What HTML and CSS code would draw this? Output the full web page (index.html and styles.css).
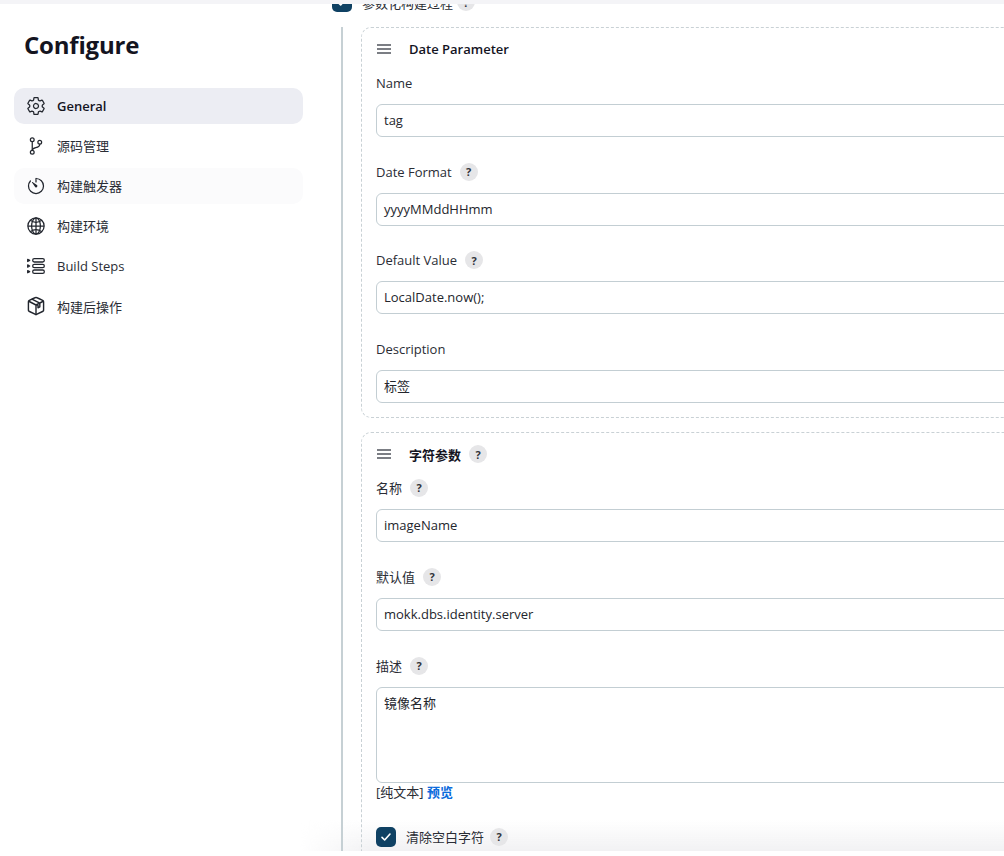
FILE: index.html
```html
<!DOCTYPE html>
<html lang="zh">
<head>
<meta charset="utf-8">
<title>Configure</title>
<link rel="stylesheet" href="styles.css">
</head>
<body>
<div class="topstrip"></div>
<div class="page">
  <aside class="side">
    <h1 class="title">Configure</h1>
    <nav class="nav">
      <a class="item active">
        <svg class="ico" viewBox="0 0 512 512"><path fill="none" stroke="currentColor" stroke-width="32" stroke-linecap="round" stroke-linejoin="round" d="M262.29 192.31a64 64 0 1057.4 57.4 64.13 64.13 0 00-57.4-57.4zM416.39 256a154.34 154.34 0 01-1.53 20.79l45.21 35.46a10.81 10.81 0 012.45 13.75l-42.77 74a10.81 10.81 0 01-13.14 4.59l-44.9-18.08a16.11 16.11 0 00-15.17 1.75A164.48 164.48 0 01325 400.8a15.94 15.94 0 00-8.82 12.14l-6.73 47.89a11.08 11.08 0 01-10.68 9.17h-85.54a11.11 11.11 0 01-10.69-8.87l-6.72-47.82a16.07 16.07 0 00-9-12.22 155.3 155.3 0 01-21.46-12.57 16 16 0 00-15.11-1.71l-44.89 18.07a10.81 10.81 0 01-13.14-4.58l-42.77-74a10.8 10.8 0 012.45-13.75l38.21-30a16.05 16.05 0 006-14.08c-.36-4.17-.58-8.33-.58-12.5s.21-8.27.58-12.35a16 16 0 00-6.07-13.94l-38.19-30A10.81 10.81 0 0149.48 186l42.77-74a10.81 10.81 0 0113.14-4.59l44.9 18.08a16.11 16.11 0 0015.17-1.75A164.48 164.48 0 01187 111.2a15.94 15.94 0 008.82-12.14l6.73-47.89A11.08 11.08 0 01213.23 42h85.54a11.11 11.11 0 0110.69 8.87l6.72 47.82a16.07 16.07 0 009 12.22 155.3 155.3 0 0121.46 12.57 16 16 0 0015.11 1.71l44.89-18.07a10.81 10.81 0 0113.14 4.58l42.77 74a10.8 10.8 0 01-2.45 13.75l-38.21 30a16.05 16.05 0 00-6.05 14.08c.33 4.14.55 8.3.55 12.47z"/></svg>
        <span class="label strong">General</span>
      </a>
      <a class="item">
        <svg class="ico" viewBox="0 0 512 512"><g fill="none" stroke="currentColor" stroke-width="32" stroke-linecap="round" stroke-linejoin="round"><circle cx="160" cy="96" r="48"/><circle cx="160" cy="416" r="48"/><path d="M160 368V144"/><circle cx="352" cy="160" r="48"/><path d="M352 208c0 128-192 48-192 160"/></g></svg>
        <span class="label cjk">源码管理</span>
      </a>
      <a class="item hover">
        <svg class="ico" viewBox="0 0 512 512"><path fill="none" stroke="currentColor" stroke-width="32" stroke-linecap="round" stroke-linejoin="round" d="M112.91 128A191.85 191.85 0 0064 254c-1.18 106.35 85.65 193.8 192 194 106.2.2 192-85.83 192-192 0-104.54-83.55-189.61-187.5-192a4.36 4.36 0 00-4.5 4.37V152"/><path fill="currentColor" d="M233.38 278.63l-79-113a8.13 8.13 0 0111.32-11.32l113 79a32.5 32.5 0 01-37.25 53.26 33.21 33.21 0 01-8.07-7.94z"/></svg>
        <span class="label cjk">构建触发器</span>
      </a>
      <a class="item">
        <svg class="ico" viewBox="0 0 512 512"><g fill="none" stroke="currentColor" stroke-width="32" stroke-miterlimit="10"><path d="M256 48C141.13 48 48 141.13 48 256s93.13 208 208 208 208-93.13 208-208S370.87 48 256 48z"/><path d="M256 48c-58.07 0-112.67 93.13-112.67 208S197.93 464 256 464s112.67-93.13 112.67-208S314.07 48 256 48z"/><path stroke-linecap="round" stroke-linejoin="round" d="M117.33 117.33c38.24 27.15 86.38 43.34 138.67 43.34s100.43-16.19 138.67-43.34M394.67 394.67c-38.24-27.15-86.38-43.34-138.67-43.34s-100.43 16.19-138.67 43.34"/><path d="M256 48v416M464 256H48"/></g></svg>
        <span class="label cjk">构建环境</span>
      </a>
      <a class="item">
        <svg class="ico" viewBox="0 0 24 24"><g fill="none" stroke="currentColor" stroke-width="1.500" stroke-linejoin="round"><rect x="8" y="3.200" width="14" height="4" rx="2"/><rect x="8" y="10" width="14" height="4" rx="2"/><rect x="8" y="16.800" width="14" height="4" rx="2"/><path d="M2 4l2.400 1.300L2 6.600zM2 10.700l2.400 1.300L2 13.300zM2 17.500l2.400 1.300L2 20.100z"/></g></svg>
        <span class="label">Build Steps</span>
      </a>
      <a class="item">
        <svg class="ico" viewBox="0 0 24 24"><g fill="none" stroke="currentColor" stroke-width="1.700" stroke-linejoin="round" stroke-linecap="round"><path d="M12 1.800c.7 0 7 2.800 8.400 3.800.5.300.7.700.7 1.200v10.200c0 .6-.2 1-.7 1.300L12 22.400 3.600 18.300c-.5-.3-.7-.7-.7-1.300V6.800c0-.5.200-.900.700-1.200C5 4.600 11.300 1.800 12 1.800z"/><path d="M3.300 6.300L12 10.800l8.700-4.500M12 10.800v11.400M7.600 4l9 4.600v4.400l-2.200 1.100v-4.400"/></g></svg>
        <span class="label">构建后操作</span>
      </a>
    </nav>
  </aside>
  <main class="main">
    <div class="toprow">
      <span class="check"><svg viewBox="0 0 24 24"><path d="M6 12.500l4 4 8-9" fill="none" stroke="#fff" stroke-width="2.400" stroke-linecap="round" stroke-linejoin="round"/></svg></span>
      <span class="check-text">参数化构建过程</span>
      <span class="help">?</span>
    </div>
    <div class="section">
      <div class="box">
        <div class="box-head">
          <svg class="handle" viewBox="0 0 14 10"><path d="M0 1h14M0 5h14M0 9h14" stroke="#50545c" stroke-width="1.300"/></svg>
          <span class="box-title lift">Date Parameter</span>
        </div>
        <div class="field">
          <div class="flabel">Name</div>
          <div class="input">tag</div>
        </div>
        <div class="field">
          <div class="flabel">Date Format <span class="help">?</span></div>
          <div class="input">yyyyMMddHHmm</div>
        </div>
        <div class="field">
          <div class="flabel">Default Value <span class="help">?</span></div>
          <div class="input">LocalDate.now();</div>
        </div>
        <div class="field">
          <div class="flabel">Description</div>
          <div class="input">标签</div>
        </div>
      </div>
      <div class="box">
        <div class="box-head">
          <svg class="handle" viewBox="0 0 14 10"><path d="M0 1h14M0 5h14M0 9h14" stroke="#50545c" stroke-width="1.300"/></svg>
          <span class="box-title">字符参数</span>
          <span class="help">?</span>
        </div>
        <div class="field wide">
          <div class="flabel">名称 <span class="help">?</span></div>
          <div class="input">imageName</div>
        </div>
        <div class="field wide">
          <div class="flabel">默认值 <span class="help">?</span></div>
          <div class="input">mokk.dbs.identity.server</div>
        </div>
        <div class="field">
          <div class="flabel">描述 <span class="help">?</span></div>
          <div class="input area">镜像名称</div>
          <div class="format">[纯文本] <a class="preview">预览</a></div>
        </div>
        <div class="checkrow">
          <span class="check"><svg viewBox="0 0 24 24"><path d="M6 12.500l4 4 8-9" fill="none" stroke="#fff" stroke-width="2.400" stroke-linecap="round" stroke-linejoin="round"/></svg></span>
          <span class="check-text">清除空白字符</span>
          <span class="help">?</span>
        </div>
      </div>
    </div>
  </main>
</div>
<div class="bottomfade"></div>
<div class="bottomcover"></div>
</body>
</html>
```

FILE: styles.css
```css
* { box-sizing: border-box; }
html, body { margin: 0; height: 100%; overflow: hidden; background: #fff; }
body {
  font-family: "Open Sans", "Noto Sans CJK SC", sans-serif;
  font-size: 13px;
  color: #14141f;
}
.topstrip {
  position: absolute; top: 0; left: 0; right: 0; height: 4px;
  background: #f4f4f7; z-index: 3;
}
.bottomfade {
  position: absolute; left: 300px; right: 0; top: 820px; height: 31px;
  background: linear-gradient(to bottom, rgba(240,240,242,0), rgba(240,240,242,.9));
  -webkit-mask-image: linear-gradient(to right, transparent, #000 70px);
  mask-image: linear-gradient(to right, transparent, #000 70px);
  z-index: 0; pointer-events: none;
}
.bottomcover {
  position: absolute; left: 0; right: 0; top: 851px; bottom: 0;
  background: #fff; z-index: 3;
}
.page { position: relative; z-index: 1; display: grid; grid-template-columns: 303px 1fr; column-gap: 24px; padding-left: 14px; height: 856px; overflow: hidden; }
.title { margin: 26px 0 25px 10px; font-size: 24px; line-height: 37px; font-weight: 700; letter-spacing: -.2px; color: #14141f; font-family: "Open Sans", sans-serif; }
.nav { display: flex; flex-direction: column; gap: 4px; width: 289px; }
.item { display: flex; align-items: center; gap: 11px; height: 36px; padding: 0 12px; border-radius: 10px; color: #14141f; }
.item.active { background: #ecedf3; }
.item.hover { background: #fbfbfc; }
.ico { width: 20px; height: 20px; flex: none; color: #22262e; }
.label { font-size: 13px; color: #2a2d35; }
.cjk { padding-bottom: 2px; }
.lift { padding-bottom: 2px; }
.strong { font-weight: 600; color: #14141f; }
.main { margin-top: -8px; min-width: 0; width: 800px; }
.toprow { display: flex; align-items: center; height: 20px; margin-left: -9px; }
.toprow .check-text { margin-left: 10px; }
.toprow .help { margin-left: 4px; }
.check { width: 20px; height: 20px; border-radius: 5px; background: #0f4163; display: inline-flex; align-items: center; justify-content: center; flex: none; }
.check svg { width: 16px; height: 16px; }
.check-text { font-size: 13px; color: #2a2d35; }
.help { display: inline-flex; width: 18px; height: 18px; border-radius: 50%; background: #e6e6e8; align-items: center; justify-content: center; font-size: 11px; font-weight: 700; color: #30333a; font-family: "Open Sans", sans-serif; }
.section { margin-top: 15px; border-left: 2px solid #c6d0d4; padding-left: 18px; }
.box { border: 1px dashed #c9d1d5; border-radius: 10px; padding: 0 14px 14px; width: 760px; }
.box + .box { margin-top: 14px; }
.box-head { display: flex; align-items: center; height: 43px; }
.handle { width: 14px; height: 10px; flex: none; margin: 0 18px 1px 1px; }
.box-title { font-weight: 600; font-size: 13px; color: #14141f; }
.box-head .help { margin-left: 8px; }
.field { margin-bottom: 22.670px; }
.field.wide { margin-bottom: 23px; }
.field:last-child { margin-bottom: 0; }
.flabel { display: flex; align-items: center; gap: 8px; height: 25px; padding-bottom: 1px; margin-bottom: 8px; color: #2a2d35; }
.input { height: 33px; border: 1px solid #c3ced3; border-radius: 6px; padding: 0 7px; line-height: 30px; font-size: 13px; color: #24262d; background: #fff; }
.area { height: 96px; }
.format { line-height: 18px; font-size: 13px; color: #2a2d35; }
.preview { color: #0b6bdc; font-weight: 600; }
.field:has(.format) { margin-bottom: 0; }
.checkrow { display: flex; align-items: center; gap: 10px; margin-top: 26px; }
.checkrow .help { margin-left: -4px; }
```
